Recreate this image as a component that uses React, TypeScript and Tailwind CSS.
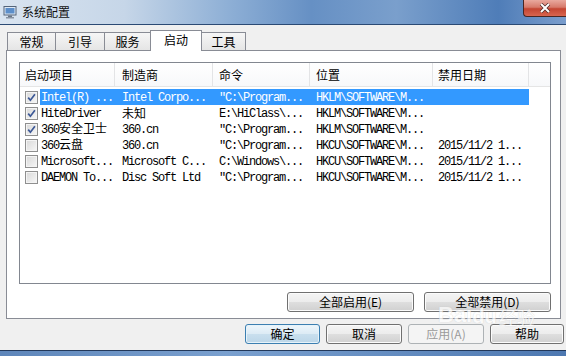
type Row = {
  on: boolean;
  name: string;
  maker: string;
  cmd: string;
  loc: string;
  date: string;
  sel?: boolean;
};

const rows: Row[] = [
  { on: true, name: "Intel(R) ...", maker: "Intel Corpo...", cmd: "\"C:\\Program...", loc: "HKLM\\SOFTWARE\\M...", date: "", sel: true },
  { on: true, name: "HiteDriver", maker: "未知", cmd: "E:\\HiClass\\...", loc: "HKLM\\SOFTWARE\\M...", date: "" },
  { on: true, name: "360安全卫士", maker: "360.cn", cmd: "\"C:\\Program...", loc: "HKLM\\SOFTWARE\\M...", date: "" },
  { on: false, name: "360云盘", maker: "360.cn", cmd: "\"C:\\Program...", loc: "HKCU\\SOFTWARE\\M...", date: "2015/11/2 1..." },
  { on: false, name: "Microsoft...", maker: "Microsoft C...", cmd: "C:\\Windows\\...", loc: "HKCU\\SOFTWARE\\M...", date: "2015/11/2 1..." },
  { on: false, name: "DAEMON To...", maker: "Disc Soft Ltd", cmd: "\"C:\\Program...", loc: "HKCU\\SOFTWARE\\M...", date: "2015/11/2 1..." },
];

const CJK = /([\u3000-\u9fff\uff00-\uffef]+)/;

// SimSun-like look: half-width latin (6px) next to full-width CJK (12px)
function Txt({ s }: { s: string }) {
  return (
    <>
      {s
        .split(CJK)
        .filter(Boolean)
        .map((p, i) =>
          CJK.test(p) ? (
            <span key={i} className="font-['Noto_Sans_CJK_SC',sans-serif] tracking-normal">
              {p}
            </span>
          ) : (
            <span key={i} className="font-['Liberation_Mono',monospace] tracking-[-1.2px]">
              {p}
            </span>
          )
        )}
    </>
  );
}

function Check({ on }: { on: boolean }) {
  return (
    <span className="flex h-[13px] w-[13px] items-center justify-center border border-[#8f8f8f] bg-[linear-gradient(135deg,#d8d8d8,#f7f7f7)] shadow-[inset_0_0_0_1px_#f4f4f4]">
      {on && (
        <svg width="9" height="9" viewBox="0 0 9 9">
          <path d="M1.2 4.6 L3.4 7.2 L7.9 1.2" stroke="#3c5896" strokeWidth="1.7" fill="none" />
        </svg>
      )}
    </span>
  );
}

function Btn({ label, w, kind = "normal" }: { label: string; w: string; kind?: "normal" | "focus" | "off" }) {
  const base =
    "flex h-[20px] items-center justify-center rounded-[3px] border font-['Noto_Sans_CJK_SC',sans-serif] text-[12px] leading-none";
  const look =
    kind === "focus"
      ? "border-[#3c7fb1] bg-[linear-gradient(#eef6fb_0%,#dcebf5_50%,#c9dfee_52%,#bcd6e8_100%)] text-black shadow-[inset_0_0_0_1px_#e6f3fa]"
      : kind === "off"
      ? "border-[#adb2b5] bg-[#f4f4f4] text-[#9a9a9a]"
      : "border-[#707070] bg-[linear-gradient(#f4f4f4_0%,#ececec_50%,#dedede_52%,#d0d0d0_100%)] text-black shadow-[inset_0_0_0_1px_#fbfbfb]";
  return <div className={`${base} ${look} ${w}`}>{label}</div>;
}

export default function App() {
  return (
    <div className="flex h-[356px] w-[566px] flex-col overflow-hidden bg-[#f0f0f0] font-['Noto_Sans_CJK_SC',sans-serif]">
      {/* title bar */}
      <div className="flex h-[24px] shrink-0 items-start bg-[linear-gradient(90deg,#d9e4f0_0%,#c6d6e8_22%,#8fb0d6_40%,#6690c4_55%,#7a9fcc_70%,#4f7db8_88%,#7a9dcc_100%)]">
        <div className="flex h-full items-center pl-[3px]">
          <svg width="14" height="14" viewBox="0 0 14 14">
            <rect x="1" y="1.5" width="12" height="8.5" fill="#dfe9f5" stroke="#55657a" />
            <rect x="2.5" y="3" width="9" height="5.5" fill="#5d8fca" />
            <rect x="5" y="10.5" width="4" height="1.5" fill="#6a7686" />
            <rect x="3" y="12" width="8" height="1.5" fill="#8994a3" />
          </svg>
          <span className="ml-[5px] text-[12px] text-[#111]">系统配置</span>
        </div>
        <div className="ml-auto flex h-[17px] w-[43px] items-center justify-center rounded-bl-[4px] border border-t-0 border-r-0 border-[#4a2622] bg-[linear-gradient(#e9a99e_0%,#d77a6b_45%,#c44532_55%,#d8654f_100%)]">
          <svg width="12" height="10" viewBox="0 0 12 10">
            <path d="M2 1 L10 9 M10 1 L2 9" stroke="#4a2a28" strokeWidth="3.4" />
            <path d="M2 1 L10 9 M10 1 L2 9" stroke="#ffffff" strokeWidth="2" />
          </svg>
        </div>
      </div>
      <div className="h-px shrink-0 bg-[#2b4a74]" />

      {/* body */}
      <div className="relative flex flex-1 flex-col pt-[5px]">
        {/* tabs */}
        <div className="-mb-px ml-[7px] flex h-[21px] items-end text-[12px] leading-none text-black">
          <div className="flex h-[19px] w-[49px] items-center justify-center border border-b-0 border-[#898c95] bg-[linear-gradient(#f6f6f6,#e4e4e4)]">常规</div>
          <div className="-ml-px flex h-[19px] w-[50px] items-center justify-center border border-b-0 border-[#898c95] bg-[linear-gradient(#f6f6f6,#e4e4e4)]">引导</div>
          <div className="-ml-px flex h-[19px] w-[47px] items-center justify-center border border-b-0 border-[#898c95] bg-[linear-gradient(#f6f6f6,#e4e4e4)]">服务</div>
          <div className="relative z-10 -ml-px flex h-[21px] w-[52px] items-center justify-center border border-b-0 border-[#898c95] bg-white pb-[2px]">启动</div>
          <div className="-ml-px flex h-[19px] w-[45px] items-center justify-center border border-b-0 border-[#898c95] bg-[linear-gradient(#f6f6f6,#e4e4e4)]">工具</div>
        </div>

        {/* tab page */}
        <div className="ml-[6px] flex h-[269px] w-[555px] flex-col border border-[#898c95] bg-white pl-[12px] pt-[11px]">
          <div className="h-[222px] w-[532px] border border-[#828790] bg-white">
            <div className="grid h-[24px] grid-cols-[95px_98px_97px_123px_96px_1fr] border-b border-[#e5e5e5] bg-[linear-gradient(#ffffff,#f7f8fa)] text-[12px] leading-none text-black">
              <div className="flex items-center border-r border-[#e3e4e6] pl-[5px]">启动项目</div>
              <div className="flex items-center border-r border-[#e3e4e6] pl-[7px]">制造商</div>
              <div className="flex items-center border-r border-[#e3e4e6] pl-[6px]">命令</div>
              <div className="flex items-center border-r border-[#e3e4e6] pl-[6px]">位置</div>
              <div className="flex items-center border-r border-[#e3e4e6] pl-[5px]">禁用日期</div>
              <div />
            </div>
            <div className="pt-[2px] text-[12px] leading-[16px]">
              {rows.map((r, i) => (
                <div key={i} className="flex h-[16px] items-center">
                  <div className="flex w-[20px] shrink-0 pl-[5px]">
                    <Check on={r.on} />
                  </div>
                  <div
                    className={`grid h-full grid-cols-[75px_98px_97px_123px_96px] items-center whitespace-nowrap ${
                      r.sel ? "bg-[#3399ff] text-white" : "text-black"
                    }`}
                  >
                    <div className="overflow-hidden pl-px"><Txt s={r.name} /></div>
                    <div className="overflow-hidden pl-[7px]"><Txt s={r.maker} /></div>
                    <div className="overflow-hidden pl-[6px]"><Txt s={r.cmd} /></div>
                    <div className="overflow-hidden pl-[6px]"><Txt s={r.loc} /></div>
                    <div className="overflow-hidden pl-[5px]"><Txt s={r.date} /></div>
                  </div>
                </div>
              ))}
            </div>
          </div>
          <div className="mt-[8px] flex w-[532px] justify-end gap-[10px]">
            <Btn label="全部启用(E)" w="w-[127px]" />
            <Btn label="全部禁用(D)" w="w-[127px]" />
          </div>
        </div>

        {/* dialog buttons */}
        <div className="mt-[5px] flex justify-end gap-[6px] pr-[2px]">
          <Btn label="确定" w="w-[75px]" kind="focus" />
          <Btn label="取消" w="w-[76px]" />
          <Btn label="应用(A)" w="w-[76px]" kind="off" />
          <Btn label="帮助" w="w-[74px]" />
        </div>

        {/* watermark */}
        <div className="pointer-events-none absolute left-[438px] top-[279px] flex items-end font-['Liberation_Sans',sans-serif] text-[22px] font-bold leading-none text-white opacity-70 [text-shadow:0_0_1px_#bbbbbb]">
          Bai<span className="text-[20px]">du</span>
          <span className="ml-[2px] font-['Noto_Sans_CJK_SC',sans-serif] text-[18px] font-normal">经验</span>
        </div>
      </div>

      {/* bottom frame */}
      <div className="h-[6px] shrink-0 border-t border-[#22385a] bg-[linear-gradient(90deg,#5e86ba,#7aa0cf_40%,#4d78b1)]" />
    </div>
  );
}
